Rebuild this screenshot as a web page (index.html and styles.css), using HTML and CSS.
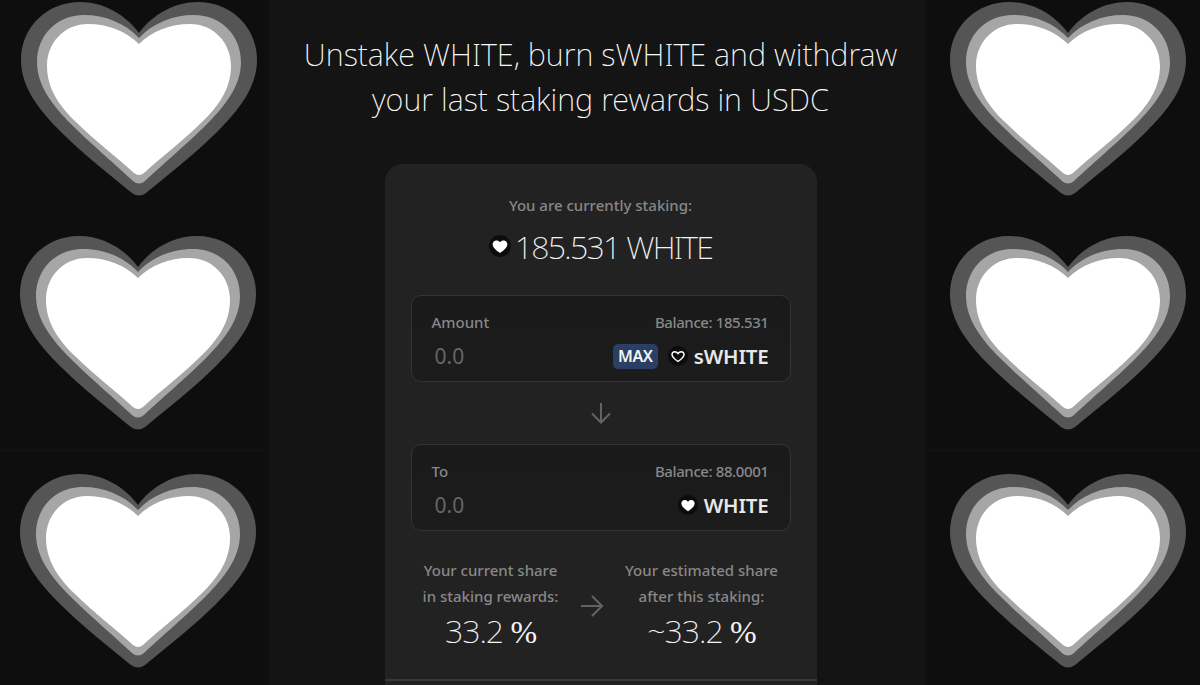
FILE: index.html
```html
<!DOCTYPE html>
<html lang="en">
<head>
<meta charset="utf-8">
<title>Unstake WHITE</title>
<link rel="stylesheet" href="styles.css">
</head>
<body>
<svg class="defs" width="0" height="0" aria-hidden="true">
  <symbol id="big-heart" viewBox="0 0 236 195">
    <path fill="#555" d="M118 31C104 12 82 0 59 0C26 0 0 25 0 58C0 85 18 108 40 130C60 150 95 178 111 191Q118 196 125 191C141 178 176 150 196 130C218 108 236 85 236 58C236 25 210 0 177 0C154 0 132 12 118 31Z"/>
    <path fill="#a6a6a6" d="M118 36C104 21 84 13 63 13C36 13 16 33 16 60C16 83 31 103 50 122C68 140 96 164 112 179Q118 184 124 179C140 164 168 140 186 122C205 103 220 83 220 60C220 33 200 13 173 13C152 13 132 21 118 36Z"/>
    <path fill="#fff" d="M118 42C105 29 87 22 67 22C43 22 26 41 26 64C26 86 38 104 55 120C72 137 98 157 113 171Q118 175 123 171C138 157 164 137 181 120C198 104 210 86 210 64C210 41 193 22 169 22C149 22 131 29 118 42Z"/>
  </symbol>
  <symbol id="solid-heart" viewBox="0 0 24 24">
    <circle cx="12" cy="12" r="12" fill="#0c0c0c"/>
    <path fill="#fff" d="M12 19.5C8.5 17 4 14 4 10C4 7.6 5.8 6 8 6C9.6 6 11 6.7 12 8C13 6.7 14.4 6 16 6C18.2 6 20 7.6 20 10C20 14 15.5 17 12 19.5Z"/>
  </symbol>
  <symbol id="outline-heart" viewBox="0 0 24 24">
    <circle cx="12" cy="12" r="12" fill="#0c0c0c"/>
    <path fill="none" stroke="#fff" stroke-width="1.7" d="M12 18.6C8.8 16.4 4.8 13.8 4.8 10.2C4.8 8.1 6.3 6.8 8.2 6.8C9.7 6.8 11 7.6 12 9C13 7.6 14.3 6.8 15.8 6.8C17.7 6.8 19.2 8.1 19.2 10.2C19.2 13.8 15.2 16.4 12 18.6Z"/>
  </symbol>
</svg>

<div class="page">
  <aside class="side side-left">
    <div class="tile tile-1"><svg class="heart"><use href="#big-heart"/></svg></div>
    <div class="tile tile-2"><svg class="heart"><use href="#big-heart"/></svg></div>
    <div class="tile tile-3"><svg class="heart"><use href="#big-heart"/></svg></div>
  </aside>

  <main class="center">
    <h1 class="title">Unstake WHITE, burn sWHITE and withdraw<br>your last staking rewards in USDC</h1>

    <section class="card">
      <p class="staking-label">You are currently staking:</p>
      <div class="staking-value">
        <svg class="icon-value"><use href="#solid-heart"/></svg>
        <span>185.531 WHITE</span>
      </div>

      <div class="box">
        <div class="box-row">
          <span>Amount</span>
          <span class="balance">Balance: 185.531</span>
        </div>
        <div class="box-row box-row-main">
          <span class="amount">0.0</span>
          <div class="token">
            <span class="max">MAX</span>
            <svg class="icon-token icon-outline"><use href="#outline-heart"/></svg>
            <span class="token-name">sWHITE</span>
          </div>
        </div>
      </div>

      <div class="down-arrow">
        <svg width="22" height="22" viewBox="0 0 22 22" fill="none" stroke="#636363" stroke-width="2"><path d="M11 1V20M2 11.5L11 20.5L20 11.5"/></svg>
      </div>

      <div class="box">
        <div class="box-row">
          <span>To</span>
          <span class="balance">Balance: 88.0001</span>
        </div>
        <div class="box-row box-row-main">
          <span class="amount">0.0</span>
          <div class="token">
            <svg class="icon-token"><use href="#solid-heart"/></svg>
            <span class="token-name">WHITE</span>
          </div>
        </div>
      </div>

      <div class="shares">
        <div class="share">
          <p class="share-label">Your current share<br>in staking rewards:</p>
          <p class="share-value">33.2 <span class="pct">%</span></p>
        </div>
        <svg class="share-arrow" width="22" height="22" viewBox="0 0 22 22" fill="none" stroke="#636363" stroke-width="2"><path d="M0 11H21M11 1L21 11L11 21"/></svg>
        <div class="share">
          <p class="share-label">Your estimated share<br>after this staking:</p>
          <p class="share-value">~33.2 <span class="pct">%</span></p>
        </div>
      </div>

      <div class="card-footer"></div>
    </section>
  </main>

  <aside class="side side-right">
    <div class="tile tile-1"><svg class="heart"><use href="#big-heart"/></svg></div>
    <div class="tile tile-2"><svg class="heart"><use href="#big-heart"/></svg></div>
    <div class="tile tile-3"><svg class="heart"><use href="#big-heart"/></svg></div>
  </aside>
</div>
</body>
</html>
```
FILE: styles.css
```css
* { box-sizing: border-box; }

html, body {
  margin: 0;
  height: 685px;
  overflow: hidden;
  background: #111;
}

body {
  font-family: "Noto Sans", "Open Sans", sans-serif;
  color: #fff;
}

p, h1 { margin: 0; }

.defs { display: block; }

.page {
  display: grid;
  grid-template-columns: 270px 655px 275px;
  height: 685px;
}

.side {
  display: flex;
  flex-direction: column;
  gap: 2px;
  height: 685px;
}

.tile {
  background: #0e0e0e;
  flex: none;
}

.tile-1 { height: 215px; padding-top: 2px; }
.tile-2 { height: 232px; padding-top: 19px; }
.tile-3 { height: 236px; padding-top: 23px; }

.side-left .tile { padding-left: 20px; margin-right: 2px; }
.side-left .tile-1 { padding-left: 21px; }
.side-right .tile { padding-left: 25px; margin-left: 1px; }
.side-right .heart { margin-left: -1px; }

.heart {
  display: block;
  width: 236px;
  height: 195px;
}

.center {
  background: #141414;
  display: flex;
  flex-direction: column;
  align-items: center;
  height: 900px;
  padding-left: 6px;
}

.title {
  margin-top: 32px;
  font-size: 30.7px;
  font-weight: 200;
  line-height: 45px;
  text-align: center;
  color: #fafafa;
  white-space: nowrap;
}

.card {
  width: 432px;
  margin-top: 42px;
  padding: 31px 26px 0;
  background: #222;
  border-radius: 18px;
  display: flex;
  flex-direction: column;
}

.staking-label {
  text-align: center;
  font-size: 15px;
  font-weight: 550;
  line-height: 20px;
  color: #888;
}

.staking-value {
  margin-top: 11px;
  height: 40px;
  display: flex;
  align-items: center;
  justify-content: center;
  gap: 4px;
  font-size: 32px;
  font-weight: 200;
  letter-spacing: -1.7px;
  color: #f4f4f4;
}

.icon-value { width: 22px; height: 22px; }

.box {
  margin-top: 29px;
  height: 87px;
  padding: 16px 21px 0 20px;
  background: linear-gradient(#1a1a1a, #1c1c1c);
  border: 1px solid #343434;
  border-radius: 10px;
}

.box-row {
  display: flex;
  justify-content: space-between;
  align-items: center;
  height: 20px;
  font-size: 15px;
  font-weight: 550;
  color: #888;
}

.box-row .balance { letter-spacing: -0.4px; }

.box-row-main {
  margin-top: 7px;
  height: 34px;
}

.amount {
  padding-left: 3px;
  font-size: 21px;
  font-weight: 400;
  color: #666;
}

.token {
  display: flex;
  align-items: center;
}

.max {
  width: 45px;
  height: 25px;
  margin-right: 10px;
  border-radius: 5px;
  background: #2a3f63;
  color: #f4f4f4;
  font-size: 16px;
  font-weight: 600;
  line-height: 25px;
  text-align: center;
  letter-spacing: -0.4px;
}

.icon-token {
  width: 20px;
  height: 20px;
  margin-right: 6px;
}

.token-name {
  font-size: 20.5px;
  font-weight: 600;
  color: #e8e8e8;
  letter-spacing: -0.2px;
}

.down-arrow {
  height: 62px;
  display: flex;
  align-items: center;
  justify-content: center;
}

.box + .down-arrow + .box { margin-top: 0; }

.shares {
  margin-top: 26px;
  display: grid;
  grid-template-columns: 160px 1fr 178px;
  align-items: center;
}

.share { text-align: center; }

.share-label {
  font-size: 15px;
  font-weight: 550;
  line-height: 26px;
  color: #888;
}

.share-value {
  margin-top: 3px;
  font-size: 32px;
  font-weight: 200;
  line-height: 38px;
  letter-spacing: -1px;
  color: #f4f4f4;
}

.pct {
  font-family: "Liberation Serif", serif;
  font-weight: 400;
}

.share-arrow {
  justify-self: center;
  margin-top: 3px;
}

.card-footer {
  margin: 28px -26px 0;
  height: 100px;
  border-top: 2px solid #383838;
}
```
